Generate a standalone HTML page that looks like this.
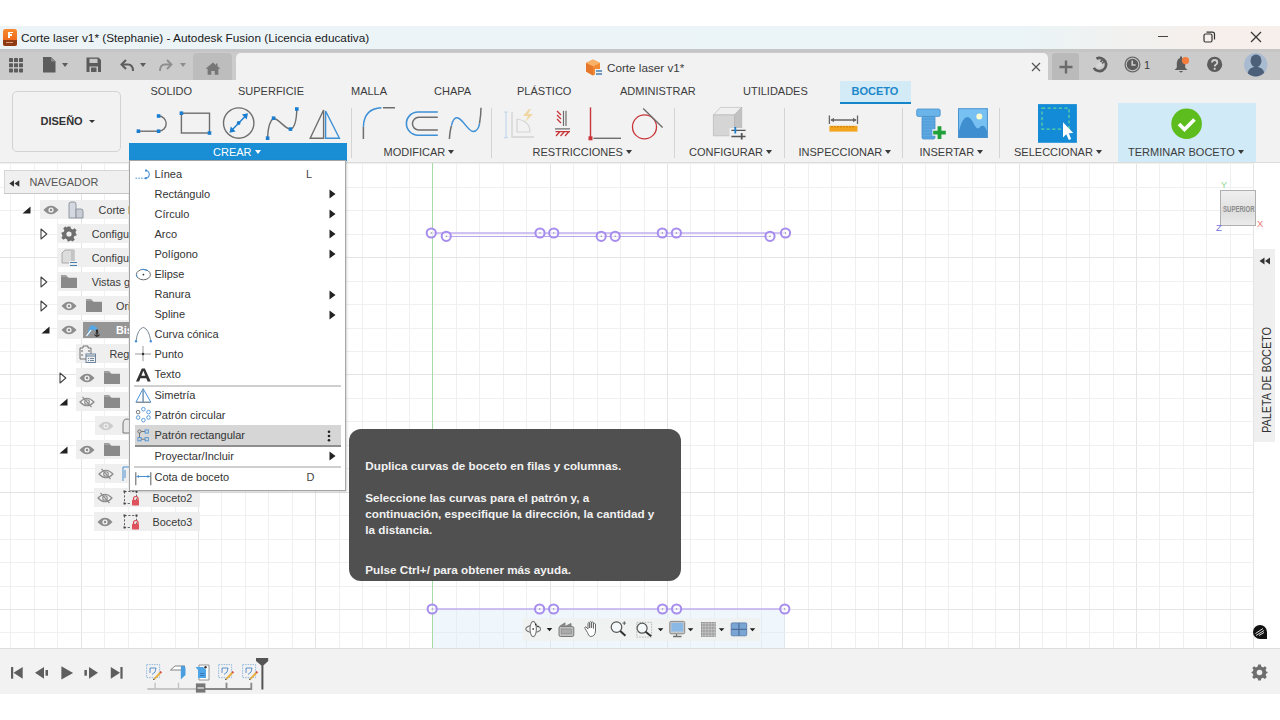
<!DOCTYPE html>
<html><head><meta charset="utf-8">
<style>
*{margin:0;padding:0;box-sizing:border-box}
html,body{width:1280px;height:720px;overflow:hidden;background:#fff;font-family:"Liberation Sans",sans-serif;color:#3c3c3c}
.a{position:absolute}
svg{position:absolute;overflow:visible}
#title{left:0;top:26px;width:1280px;height:23px;background:linear-gradient(90deg,#ecf4f8 0%,#ebf4f7 80%,#f1f1ef 88%,#f6efeb 95%,#f6efeb 100%)}
#tbar{left:0;top:49px;width:1280px;height:31px;background:#cbcbcb;border-top:3px solid #c5c5c5}
#ribbon{left:0;top:80px;width:1280px;height:83px;background:#f2f2f2;border-bottom:1px solid #dcdcdc}
#timeline{left:0;top:648px;width:1280px;height:46px;background:#f2f2f2;border-top:1px solid #dddddd}
.t{position:absolute;white-space:nowrap;line-height:1}
.tab{top:86px;font-size:11px;color:#3c3c3c}
.gl{top:147px;font-size:11px;color:#3c3c3c}
.sep{position:absolute;top:108px;width:1px;height:50px;background:#d4d4d4}
.arr{display:inline-block;width:0;height:0;border-left:3.5px solid transparent;border-right:3.5px solid transparent;border-top:4px solid #3a3a3a;vertical-align:middle;margin-left:3px;position:relative;top:-1px}
</style></head><body>
<div id="title" class="a"></div>
<div id="tbar" class="a"></div>
<div id="ribbon" class="a"></div>
<!--VIEWPORT--><svg style="left:0;top:163px" width="1280" height="485" viewBox="0 0 1280 485"><rect width="1280" height="485" fill="#fff"/><path d="M10.5 0V485" stroke="#f0f0f0"/><path d="M34.5 0V485" stroke="#f0f0f0"/><path d="M57.5 0V485" stroke="#f0f0f0"/><path d="M81.5 0V485" stroke="#e4e4e4"/><path d="M104.5 0V485" stroke="#f0f0f0"/><path d="M128.5 0V485" stroke="#f0f0f0"/><path d="M151.5 0V485" stroke="#f0f0f0"/><path d="M175.5 0V485" stroke="#f0f0f0"/><path d="M198.5 0V485" stroke="#e4e4e4"/><path d="M221.5 0V485" stroke="#f0f0f0"/><path d="M245.5 0V485" stroke="#f0f0f0"/><path d="M268.5 0V485" stroke="#f0f0f0"/><path d="M292.5 0V485" stroke="#f0f0f0"/><path d="M315.5 0V485" stroke="#e4e4e4"/><path d="M339.5 0V485" stroke="#f0f0f0"/><path d="M362.5 0V485" stroke="#f0f0f0"/><path d="M386.5 0V485" stroke="#f0f0f0"/><path d="M409.5 0V485" stroke="#f0f0f0"/><path d="M456.5 0V485" stroke="#f0f0f0"/><path d="M479.5 0V485" stroke="#f0f0f0"/><path d="M503.5 0V485" stroke="#f0f0f0"/><path d="M526.5 0V485" stroke="#f0f0f0"/><path d="M550.5 0V485" stroke="#e4e4e4"/><path d="M573.5 0V485" stroke="#f0f0f0"/><path d="M597.5 0V485" stroke="#f0f0f0"/><path d="M620.5 0V485" stroke="#f0f0f0"/><path d="M644.5 0V485" stroke="#f0f0f0"/><path d="M667.5 0V485" stroke="#e4e4e4"/><path d="M690.5 0V485" stroke="#f0f0f0"/><path d="M714.5 0V485" stroke="#f0f0f0"/><path d="M737.5 0V485" stroke="#f0f0f0"/><path d="M761.5 0V485" stroke="#f0f0f0"/><path d="M784.5 0V485" stroke="#e4e4e4"/><path d="M808.5 0V485" stroke="#f0f0f0"/><path d="M831.5 0V485" stroke="#f0f0f0"/><path d="M855.5 0V485" stroke="#f0f0f0"/><path d="M878.5 0V485" stroke="#f0f0f0"/><path d="M902.5 0V485" stroke="#e4e4e4"/><path d="M925.5 0V485" stroke="#f0f0f0"/><path d="M948.5 0V485" stroke="#f0f0f0"/><path d="M972.5 0V485" stroke="#f0f0f0"/><path d="M995.5 0V485" stroke="#f0f0f0"/><path d="M1019.5 0V485" stroke="#e4e4e4"/><path d="M1042.5 0V485" stroke="#f0f0f0"/><path d="M1066.5 0V485" stroke="#f0f0f0"/><path d="M1089.5 0V485" stroke="#f0f0f0"/><path d="M1113.5 0V485" stroke="#f0f0f0"/><path d="M1136.5 0V485" stroke="#e4e4e4"/><path d="M1159.5 0V485" stroke="#f0f0f0"/><path d="M1183.5 0V485" stroke="#f0f0f0"/><path d="M1206.5 0V485" stroke="#f0f0f0"/><path d="M1230.5 0V485" stroke="#f0f0f0"/><path d="M1253.5 0V485" stroke="#e4e4e4"/><path d="M0 0.5H1253.5" stroke="#f0f0f0"/><path d="M0 24.5H1253.5" stroke="#f0f0f0"/><path d="M0 47.5H1253.5" stroke="#f0f0f0"/><path d="M0 71.5H1253.5" stroke="#f0f0f0"/><path d="M0 94.5H1253.5" stroke="#e4e4e4"/><path d="M0 118.5H1253.5" stroke="#f0f0f0"/><path d="M0 141.5H1253.5" stroke="#f0f0f0"/><path d="M0 165.5H1253.5" stroke="#f0f0f0"/><path d="M0 188.5H1253.5" stroke="#f0f0f0"/><path d="M0 211.5H1253.5" stroke="#e4e4e4"/><path d="M0 235.5H1253.5" stroke="#f0f0f0"/><path d="M0 258.5H1253.5" stroke="#f0f0f0"/><path d="M0 282.5H1253.5" stroke="#f0f0f0"/><path d="M0 305.5H1253.5" stroke="#f0f0f0"/><path d="M0 329.5H1253.5" stroke="#e4e4e4"/><path d="M0 352.5H1253.5" stroke="#f0f0f0"/><path d="M0 376.5H1253.5" stroke="#f0f0f0"/><path d="M0 399.5H1253.5" stroke="#f0f0f0"/><path d="M0 423.5H1253.5" stroke="#f0f0f0"/><path d="M0 446.5H1253.5" stroke="#e4e4e4"/><path d="M0 469.5H1253.5" stroke="#f0f0f0"/><rect x="432" y="446" width="353" height="39" fill="#d6ebf8" opacity="0.4"/><path d="M432.5 0V485" stroke="#a6dba6"/><path d="M431 70H786" stroke="#c2b0f2" stroke-width="1.6"/><path d="M446 73.5H770" stroke="#b9a6ee" stroke-width="1.2"/><circle cx="431.25" cy="70" r="4.6" fill="#fff" fill-opacity="0.6" stroke="#a68cec" stroke-width="2"/><circle cx="431.25" cy="70" r="0.7" fill="#8a8a8a"/><circle cx="540" cy="70" r="4.6" fill="#fff" fill-opacity="0.6" stroke="#a68cec" stroke-width="2"/><circle cx="540" cy="70" r="0.7" fill="#8a8a8a"/><circle cx="553.75" cy="70" r="4.6" fill="#fff" fill-opacity="0.6" stroke="#a68cec" stroke-width="2"/><circle cx="553.75" cy="70" r="0.7" fill="#8a8a8a"/><circle cx="662.3" cy="70" r="4.6" fill="#fff" fill-opacity="0.6" stroke="#a68cec" stroke-width="2"/><circle cx="662.3" cy="70" r="0.7" fill="#8a8a8a"/><circle cx="676.4" cy="70" r="4.6" fill="#fff" fill-opacity="0.6" stroke="#a68cec" stroke-width="2"/><circle cx="676.4" cy="70" r="0.7" fill="#8a8a8a"/><circle cx="785.5" cy="70" r="4.6" fill="#fff" fill-opacity="0.6" stroke="#a68cec" stroke-width="2"/><circle cx="785.5" cy="70" r="0.7" fill="#8a8a8a"/><circle cx="446.25" cy="73.30000000000001" r="4.6" fill="#fff" fill-opacity="0.6" stroke="#a68cec" stroke-width="2"/><circle cx="446.25" cy="73.30000000000001" r="0.7" fill="#8a8a8a"/><circle cx="601.2" cy="73.30000000000001" r="4.6" fill="#fff" fill-opacity="0.6" stroke="#a68cec" stroke-width="2"/><circle cx="601.2" cy="73.30000000000001" r="0.7" fill="#8a8a8a"/><circle cx="615.2" cy="73.30000000000001" r="4.6" fill="#fff" fill-opacity="0.6" stroke="#a68cec" stroke-width="2"/><circle cx="615.2" cy="73.30000000000001" r="0.7" fill="#8a8a8a"/><circle cx="770" cy="73.30000000000001" r="4.6" fill="#fff" fill-opacity="0.6" stroke="#a68cec" stroke-width="2"/><circle cx="770" cy="73.30000000000001" r="0.7" fill="#8a8a8a"/><path d="M432 446H785" stroke="#c0adf2" stroke-width="1.6"/><circle cx="432.2" cy="446" r="4.6" fill="#fff" fill-opacity="0.6" stroke="#a68cec" stroke-width="2"/><circle cx="432.2" cy="446" r="0.7" fill="#8a8a8a"/><circle cx="539.6" cy="446" r="4.6" fill="#fff" fill-opacity="0.6" stroke="#a68cec" stroke-width="2"/><circle cx="539.6" cy="446" r="0.7" fill="#8a8a8a"/><circle cx="553.6" cy="446" r="4.6" fill="#fff" fill-opacity="0.6" stroke="#a68cec" stroke-width="2"/><circle cx="553.6" cy="446" r="0.7" fill="#8a8a8a"/><circle cx="662.5" cy="446" r="4.6" fill="#fff" fill-opacity="0.6" stroke="#a68cec" stroke-width="2"/><circle cx="662.5" cy="446" r="0.7" fill="#8a8a8a"/><circle cx="676.6" cy="446" r="4.6" fill="#fff" fill-opacity="0.6" stroke="#a68cec" stroke-width="2"/><circle cx="676.6" cy="446" r="0.7" fill="#8a8a8a"/><circle cx="784.8" cy="446" r="4.6" fill="#fff" fill-opacity="0.6" stroke="#a68cec" stroke-width="2"/><circle cx="784.8" cy="446" r="0.7" fill="#8a8a8a"/></svg><!--/VIEWPORT-->
<div id="timeline" class="a"></div>

<!-- title bar content -->
<div class="a" style="left:2.5px;top:29px;width:14px;height:16.5px;border-radius:2.5px;background:linear-gradient(180deg,#f7892e,#ea5a17);overflow:hidden">
 <div class="a" style="left:0;top:10.5px;width:14px;height:6px;background:#8e3a12"></div>
 <div class="a" style="left:5.5px;top:2.5px;width:1.8px;height:6.5px;background:#fff"></div>
 <div class="a" style="left:5.5px;top:2.5px;width:4.5px;height:1.6px;background:#fff"></div>
 <div class="a" style="left:5.5px;top:5.2px;width:3.8px;height:1.5px;background:#fff"></div>
 <div class="a" style="left:3.5px;top:12.5px;width:7px;height:1.5px;background:#d8a080"></div>
</div>
<div class="t" style="left:21px;top:32.5px;font-size:11.8px;color:#1a1a1a">Corte laser v1* (Stephanie) - Autodesk Fusion (Licencia educativa)</div>
<div class="a" style="left:1158px;top:36px;width:10px;height:1.3px;background:#444"></div>
<svg style="left:1203px;top:31px" width="13" height="12" viewBox="0 0 13 12"><rect x="1" y="3" width="8" height="8" rx="1.5" fill="none" stroke="#333" stroke-width="1.2"/><path d="M3.5 1.2 H9.5 a2 2 0 0 1 2 2 V8.5" fill="none" stroke="#333" stroke-width="1.2"/></svg>
<svg style="left:1250px;top:31px" width="12" height="12" viewBox="0 0 12 12"><path d="M1 1 L11 11 M11 1 L1 11" stroke="#333" stroke-width="1.2"/></svg>

<!-- toolbar content -->
<svg style="left:9px;top:57.5px" width="14" height="15" viewBox="0 0 14 15"><g fill="#5c5c5c"><rect x="0" y="0" width="4" height="4" rx="0.6"/><rect x="5" y="0" width="4" height="4" rx="0.6"/><rect x="10" y="0" width="4" height="4" rx="0.6"/><rect x="0" y="5.2" width="4" height="4" rx="0.6"/><rect x="5" y="5.2" width="4" height="4" rx="0.6"/><rect x="10" y="5.2" width="4" height="4" rx="0.6"/><rect x="0" y="10.4" width="4" height="4" rx="0.6"/><rect x="5" y="10.4" width="4" height="4" rx="0.6"/><rect x="10" y="10.4" width="4" height="4" rx="0.6"/></g></svg>
<svg style="left:42px;top:57px" width="28" height="16" viewBox="0 0 28 16"><path d="M1 0 H9 L13.5 4.5 V15.5 H1 Z" fill="#5c5c5c"/><path d="M9 0 V4.5 H13.5" fill="#8a8a8a"/><path d="M20 6 H26 L23 10 Z" fill="#5c5c5c"/></svg>
<svg style="left:86px;top:57px" width="16" height="16" viewBox="0 0 16 16"><path d="M0.5 0.5 H12.5 L15 3 V15 H0.5 Z" fill="#5c5c5c"/><rect x="3.5" y="1.8" width="8" height="4.2" fill="#c9c9c9"/><rect x="3.5" y="9.5" width="8.5" height="5.5" fill="#c9c9c9"/><rect x="5" y="10.5" width="5.5" height="4.5" fill="#5c5c5c"/></svg>
<svg style="left:120px;top:58px" width="28" height="15" viewBox="0 0 28 15"><path d="M6 2 L1.5 6.5 L6 11" fill="none" stroke="#5c5c5c" stroke-width="2"/><path d="M2 6.5 H8 Q13 6.5 13 13" fill="none" stroke="#5c5c5c" stroke-width="2"/><path d="M20 5 H26 L23 9 Z" fill="#5c5c5c"/></svg>
<svg style="left:158px;top:58px" width="28" height="15" viewBox="0 0 28 15"><path d="M9 2 L13.5 6.5 L9 11" fill="none" stroke="#8e8e8e" stroke-width="1.8"/><path d="M13 6.5 H7 Q2 6.5 2 13" fill="none" stroke="#8e8e8e" stroke-width="1.8"/><path d="M22 5 H28 L25 9 Z" fill="#8e8e8e"/></svg>
<div class="a" style="left:193px;top:53px;width:39px;height:27px;background:#bdbdbd;border-radius:4px 4px 0 0"></div>
<svg style="left:205px;top:61.5px" width="16" height="13" viewBox="0 0 16 13"><path d="M8 0.5 L0.5 6.8 H2.6 V12.8 H6.3 V9 H9.7 V12.8 H13.4 V6.8 H15.5 L12.5 4.3 V1.5 H11 V3 Z" fill="#777"/></svg>
<div class="a" style="left:236px;top:53px;width:812px;height:27.5px;background:#f2f2f2;border-radius:5px 5px 0 0"></div>
<svg style="left:585px;top:59px" width="19" height="18" viewBox="0 0 19 18"><path d="M1 4 L8 0.5 L15 4 V12.5 L8 16.5 L1 12.5 Z" fill="#f08a35"/><path d="M1 4 L8 7.5 L15 4 L8 0.5 Z" fill="#f9b067"/><path d="M8 7.5 V16.5 L1 12.5 V4 Z" fill="#e5782a"/><rect x="10" y="10" width="8" height="7" fill="#f0f0f0"/><path d="M11 12 H17 M17 15 H11" stroke="#4a7fb0" stroke-width="1.3"/></svg>
<div class="t" style="left:607px;top:62px;font-size:11.7px;color:#3a3a3a">Corte laser v1*</div>
<svg style="left:1031px;top:62px" width="10" height="10" viewBox="0 0 10 10"><path d="M1 1 L9 9 M9 1 L1 9" stroke="#555" stroke-width="1.2"/></svg>
<div class="a" style="left:1052px;top:53px;width:27px;height:27px;background:#bababa;border-radius:3px 3px 0 0"></div>
<svg style="left:1059px;top:60px" width="14" height="14" viewBox="0 0 14 14"><path d="M7 0.5 V13.5 M0.5 7 H13.5" stroke="#6b6b6b" stroke-width="2.4"/></svg>
<svg style="left:1091px;top:56px" width="17" height="17" viewBox="0 0 17 17"><path d="M5.40 2.67 A6.6 6.6 0 1 1 2.78 11.80" fill="none" stroke="#5c5c5c" stroke-width="2.6"/><g transform="rotate(45 8.5 8.5)"><path d="M6.5 6 H10.5 V10 Q10.5 12 8.5 12 Q6.5 12 6.5 10 Z" fill="#d6d6d6"/><path d="M7.3 6 V2.8 M9.7 6 V2.8" stroke="#5c5c5c" stroke-width="1.5"/></g></svg>
<svg style="left:1124px;top:56px" width="17" height="17" viewBox="0 0 17 17"><circle cx="8.5" cy="8.5" r="7.4" fill="none" stroke="#6a6a6a" stroke-width="1.3"/><circle cx="8.5" cy="8.5" r="5.8" fill="#5c5c5c"/><path d="M8.2 4.6 V9 H11.6" fill="none" stroke="#d0d0d0" stroke-width="1.5"/></svg>
<div class="t" style="left:1144px;top:59.5px;font-size:11px;color:#3a3a3a">1</div>
<svg style="left:1173px;top:55px" width="18" height="19" viewBox="0 0 18 19"><path d="M8 3 C4.5 3 3.8 6.5 3.8 9.5 V12.8 L1.5 15 H14.5 L12.2 12.8 V9.5 C12.2 6.5 11.5 3 8 3 Z" fill="#5c5c5c"/><path d="M7 1.5 H9 V3.5 H7 Z" fill="#5c5c5c"/><path d="M5.8 16 H10.2 L8 17.8 Z" fill="#5c5c5c"/><circle cx="12.5" cy="5.6" r="3.6" fill="#f47c3c"/></svg>
<svg style="left:1207px;top:57px" width="16" height="16" viewBox="0 0 16 16"><circle cx="7.6" cy="7.4" r="7.6" fill="#5c5c5c"/><path d="M5 5.6 Q5 3 7.6 3 Q10.3 3 10.3 5.4 Q10.3 6.9 8.7 7.7 Q7.7 8.3 7.7 9.6" fill="none" stroke="#d0d0d0" stroke-width="1.8"/><circle cx="7.7" cy="11.8" r="1.15" fill="#d0d0d0"/></svg>
<svg style="left:1244px;top:53px" width="24" height="24" viewBox="0 0 24 24"><defs><clipPath id="av"><circle cx="11.7" cy="11.8" r="11.7"/></clipPath></defs><circle cx="11.7" cy="11.8" r="11.7" fill="#a9bbd1"/><g clip-path="url(#av)"><ellipse cx="12" cy="7.8" rx="5.5" ry="6.3" fill="#4d6079"/><path d="M3 24 Q3.5 15.5 8.5 14.5 L12 13 L15.5 14.5 Q20.5 15.5 21 24 Z" fill="#4d6079"/></g></svg>

<!-- ribbon tabs -->
<div class="t tab" style="left:150.5px">SOLIDO</div>
<div class="t tab" style="left:238px">SUPERFICIE</div>
<div class="t tab" style="left:351px">MALLA</div>
<div class="t tab" style="left:434px">CHAPA</div>
<div class="t tab" style="left:517px">PLÁSTICO</div>
<div class="t tab" style="left:620px">ADMINISTRAR</div>
<div class="t tab" style="left:743px">UTILIDADES</div>
<div class="a" style="left:840px;top:80.6px;width:71px;height:23.2px;background:#d3eaf7;border-bottom:2.8px solid #1587c9"></div>
<div class="t tab" style="left:851.5px;color:#1d87c9;font-weight:bold;font-size:11px">BOCETO</div>

<!-- DISEÑO -->
<div class="a" style="left:12px;top:91px;width:109px;height:61px;border:1.5px solid #d3d3d3;border-radius:5px"></div>
<div class="t" style="left:40.5px;top:116px;font-size:11px;font-weight:bold;color:#333">DISEÑO</div>
<div class="a" style="left:89.3px;top:120px;width:0;height:0;border-left:3px solid transparent;border-right:3px solid transparent;border-top:3.5px solid #333"></div>

<!-- group labels -->
<div class="a" style="left:129px;top:143px;width:218px;height:18px;background:#1a8ed4"></div>
<div class="t gl" style="left:213px;color:#fff">CREAR<span class="arr" style="border-top-color:#fff"></span></div>
<div class="t gl" style="left:383.5px">MODIFICAR<span class="arr"></span></div>
<div class="t gl" style="left:532.5px">RESTRICCIONES<span class="arr"></span></div>
<div class="t gl" style="left:689px">CONFIGURAR<span class="arr"></span></div>
<div class="t gl" style="left:798.5px">INSPECCIONAR<span class="arr"></span></div>
<div class="t gl" style="left:919.5px">INSERTAR<span class="arr"></span></div>
<div class="a" style="left:1118px;top:103px;width:138px;height:59px;background:#d1eaf7"></div>
<div class="t gl" style="left:1014px">SELECCIONAR<span class="arr"></span></div>
<div class="t gl" style="left:1128px">TERMINAR BOCETO<span class="arr"></span></div>
<div class="sep" style="left:351px"></div>
<div class="sep" style="left:491px"></div>
<div class="sep" style="left:674px"></div>
<div class="sep" style="left:783.5px"></div>
<div class="sep" style="left:902px"></div>
<div class="sep" style="left:999px"></div>
<!--ICONS--><svg style="left:0;top:0" width="1280" height="163" viewBox="0 0 1280 163">
<g fill="none" stroke="#6e6e6e" stroke-width="1.4">
 <!-- line -->
 <path d="M138.4 131.2 H158.6"/>
 <path d="M158.6 116 A7.6 7.6 0 0 1 158.6 131.2"/>
 <!-- rect -->
 <rect x="181.4" y="113.2" width="28.1" height="19.8"/>
 <!-- circle -->
 <circle cx="238.7" cy="123.1" r="15.2"/>
 <!-- spline -->
 <path d="M267.6 137 C268 128 269.5 121 273.6 118.2 C279 119 285 129 290.5 129.2 C295 128 296.5 118 296.8 110"/>
 <!-- mirror -->
 <path d="M310.2 138.2 L323.6 110 V138.2 Z"/>
</g>
<path d="M325.6 111 V138.2 H339.4 Z" fill="none" stroke="#3d8fd6" stroke-width="1.4"/>
<g fill="#1a7ed0">
 <rect x="136.6" y="129.4" width="3.6" height="3.6"/><rect x="156.8" y="129.4" width="3.6" height="3.6"/><rect x="156.8" y="114.2" width="3.6" height="3.6"/>
 <rect x="179.6" y="111.4" width="3.6" height="3.6"/><rect x="207.7" y="131.2" width="3.6" height="3.6"/>
 <rect x="265.8" y="136.4" width="3.6" height="3.6"/><rect x="271.8" y="116.4" width="3.6" height="3.6"/><rect x="288.7" y="127.3" width="3.6" height="3.6"/><rect x="295" y="107.2" width="3.6" height="3.6"/>
 <circle cx="238.6" cy="123" r="1.9"/>
</g>
<path d="M231 131 L246.5 115" stroke="#1a7ed0" stroke-width="1.4"/>
<path d="M229.5 132.7 L230.8 126.6 L235.6 131.4 Z M248 113.3 L246.7 119.4 L241.9 114.6 Z" fill="#1a7ed0"/>

<!-- MODIFICAR -->
<path d="M363.4 139 V126.8 M383 107.8 H395" fill="none" stroke="#6e6e6e" stroke-width="1.5"/>
<path d="M363.4 126.8 Q364 108.5 381.4 107.8" fill="none" stroke="#3d8fd6" stroke-width="1.5"/>
<path d="M437.8 112 H418 A11.6 11.6 0 0 0 418 135.2 H437.8" fill="none" stroke="#3d8fd6" stroke-width="1.6"/>
<path d="M437.8 117.3 H418.8 A6.35 6.35 0 0 0 418.8 130 H437.8" fill="none" stroke="#6e6e6e" stroke-width="1.5"/>
<path d="M449.4 139 Q450 130 451.5 125.7 M479.5 123.6 Q481 115 481 107.8" fill="none" stroke="#6e6e6e" stroke-width="1.5"/>
<path d="M451.5 125.7 C453 119 455 117.6 457 117.8 C463 118.5 468 131.5 473 131.5 C477 131.5 479 127 479.5 123.6" fill="none" stroke="#3d8fd6" stroke-width="1.5"/>

<!-- RESTRICCIONES -->
<g opacity="0.55">
 <path d="M506 112 V137.6 M504 112 H508 M504 137.6 H508" stroke="#9cc4e4" stroke-width="1.2" fill="none"/>
 <path d="M512 112 V137 H534" stroke="#bdbdbd" stroke-width="1.4" fill="none"/>
 <path d="M517 119 V132 H530 Q530 121 517 119" stroke="#bdbdbd" stroke-width="1.2" fill="none"/>
 <path d="M529 109 L523 116 H528 L525 122 L533 114 H528 L531 109 Z" fill="#f0c060"/>
</g>
<path d="M563.5 110.7 V126 M566 110.7 V126 M555 128.9 H570" stroke="#6e6e6e" stroke-width="1.2" fill="none"/>
<path d="M557 111 L561 115 M557 115 L561 119 M557 119 L561 123 M556 136 L560 131.5 M560.5 136 L564.5 131.5 M565 136 L569 131.5 M555.5 131.6 H570" stroke="#c9353a" stroke-width="1.3" fill="none"/>
<path d="M590.5 107.4 V137" stroke="#c9353a" stroke-width="1.4"/>
<rect x="588.5" y="136.3" width="4" height="4" fill="#c9353a"/>
<path d="M593.4 138.3 H621" stroke="#6e6e6e" stroke-width="1.4"/>
<circle cx="644.5" cy="126.9" r="12" fill="none" stroke="#c9353a" stroke-width="1.3"/>
<path d="M643.2 108.5 L662.6 127.5" stroke="#6e6e6e" stroke-width="1.4"/>

<!-- CONFIGURAR -->
<path d="M713.4 114.9 H734.6 L741.7 107.4 H720.5 Z" fill="#efefef" stroke="#c4c4c4" stroke-width="0.8"/>
<path d="M713.4 114.9 H734.6 V135.8 H713.4 Z" fill="#d5d5d5" stroke="#bdbdbd" stroke-width="0.8"/>
<path d="M734.6 114.9 L741.7 107.4 V130.4 L734.6 135.8 Z" fill="#c2c2c2" stroke="#b5b5b5" stroke-width="0.8"/>
<rect x="729.5" y="128" width="17" height="11.5" fill="#f0f0f0"/>
<path d="M731.4 130.4 H745.6 M731.4 136.5 H745.6" stroke="#555" stroke-width="1.4"/>
<path d="M735.3 127 V133.5" stroke="#1a7ed0" stroke-width="1.8"/>
<path d="M741.7 133 V139.5" stroke="#555" stroke-width="1.8"/>

<!-- INSPECCIONAR -->
<path d="M829.4 115.5 V123.9 M857.5 115.5 V123.9 M831 120 H856" stroke="#666" stroke-width="1.3" fill="none"/>
<path d="M830.5 120 L834 117.7 V122.3 Z M856.5 120 L853 117.7 V122.3 Z" fill="#666"/>
<rect x="829.4" y="125.8" width="28.1" height="5.8" fill="#f3a51f"/>
<path d="M832 126 V127.6 M835 126 V127.6 M838 126 V127.6 M841 126 V127.6 M844 126 V127.6 M847 126 V127.6 M850 126 V127.6 M853 126 V127.6" stroke="#b06a00" stroke-width="0.8"/>

<!-- INSERTAR -->
<rect x="922" y="116" width="13" height="23" rx="1.5" fill="#5fa9e3" stroke="#4690cc" stroke-width="0.8"/>
<path d="M922 119 H935 M922 122 H935 M922 125 H935 M922 128 H935 M922 131 H935 M922 134 H935 M922 137 H935" stroke="#4a94d0" stroke-width="0.7"/>
<rect x="916.7" y="109" width="23.5" height="7.4" rx="1.5" fill="#6ab4ea" stroke="#4690cc" stroke-width="0.8"/>
<path d="M939.5 125.5 V139.7 M932.4 132.6 H946.6" stroke="#f0f0f0" stroke-width="6.5"/>
<path d="M939.5 126.3 V138.9 M933.2 132.6 H945.8" stroke="#22a03a" stroke-width="3.8"/>
<rect x="958.5" y="108.7" width="28.9" height="28.8" fill="#77c0f2" stroke="#4a93cf" stroke-width="1"/>
<path d="M959 137 V131 Q962 118 967 117 Q971 117 975 126 Q977 129.5 979 128 Q982 124 985 127 L987 131 V137 Z" fill="#3f8fd0"/>
<circle cx="979.3" cy="116.4" r="3" fill="#fdfbd0"/>

<!-- SELECCIONAR -->
<rect x="1038" y="104.1" width="38.9" height="38.7" fill="#148bd6"/>
<rect x="1042" y="108.2" width="27" height="21" fill="none" stroke="#5fd3a0" stroke-width="1.3" stroke-dasharray="3.2 2.4"/>
<path d="M1063 122.3 V137.5 L1066.3 134.2 L1068.8 140 L1071.2 138.9 L1068.8 133.3 L1073.3 133 Z" fill="#fff"/>

<!-- TERMINAR -->
<circle cx="1186.6" cy="123.8" r="15.3" fill="#5ebd1e"/>
<path d="M1179 124 L1184.5 129.5 L1194.5 119.5" fill="none" stroke="#fff" stroke-width="3.6"/>
</svg>
<!--/ICONS-->
<!--NAV--><div class="a" style="left:4px;top:170px;width:126px;height:24px;background:#f0f0f0;border:1px solid #d6d6d6;border-bottom-color:#c6c6c6"></div>
<svg style="left:9px;top:180px" width="11" height="7" viewBox="0 0 11 7"><path d="M0.3 3.5 L5 0.3 V6.7 Z M5.5 3.5 L10.3 0.3 V6.7 Z" fill="#333"/></svg>
<div class="t" style="left:29.5px;top:177px;font-size:10.9px;color:#555">NAVEGADOR</div>
<svg width="0" height="0" style="position:absolute">
<defs>
 <symbol id="eye" viewBox="0 0 16 10"><path d="M0.5 5 Q8 -3.5 15.5 5 Q8 13.5 0.5 5 Z" fill="#8c8c8c"/><circle cx="8" cy="5" r="2.6" fill="#efefef"/><circle cx="8" cy="5" r="1.2" fill="#8c8c8c"/></symbol>
 <symbol id="eyeh" viewBox="0 0 16 12"><path d="M1 6 Q8 -1.5 15 6 Q8 13.5 1 6 Z" fill="none" stroke="#8c8c8c" stroke-width="1.1"/><circle cx="8" cy="6" r="2.3" fill="none" stroke="#8c8c8c" stroke-width="1.1"/><path d="M3.5 0.8 L12.5 11.2" stroke="#8c8c8c" stroke-width="1.2"/></symbol>
 <symbol id="fold" viewBox="0 0 16 13"><path d="M0 1.2 H6 L7.5 2.8 H16 V13 H0 Z" fill="#8a8a8a"/><path d="M0 0 H5.5 V0.8 H0 Z" fill="#8a8a8a"/></symbol>
 <symbol id="sk" viewBox="0 0 16 16"><path d="M1.5 1.5 H13.5 V12" fill="none" stroke="#555" stroke-width="0.9" stroke-dasharray="2.2 1.6"/><path d="M1.5 1.5 V13.5 H8" fill="none" stroke="#555" stroke-width="0.9" stroke-dasharray="2.2 1.6"/><rect x="0.5" y="0.5" width="2" height="2" fill="#444"/><rect x="12.5" y="0.5" width="2" height="2" fill="#444"/><rect x="0.5" y="12.5" width="2" height="2" fill="#444"/><path d="M10.5 10 V8.8 A2.3 2.3 0 0 1 15.1 8.8 V10" fill="none" stroke="#d8454f" stroke-width="1.2"/><rect x="9" y="9.8" width="7" height="5.8" rx="0.8" fill="#e0535c"/></symbol>
</defs></svg>
<div class="a" style="left:40px;top:200px;width:90px;height:19px;background:#efefef"></div>
<div class="a" style="left:57.6px;top:224px;width:72.4px;height:19px;background:#efefef"></div>
<div class="a" style="left:57.6px;top:248px;width:72.4px;height:19px;background:#efefef"></div>
<div class="a" style="left:57.6px;top:272px;width:72.4px;height:19px;background:#efefef"></div>
<div class="a" style="left:57px;top:296px;width:73px;height:19px;background:#efefef"></div>
<div class="a" style="left:57px;top:320px;width:73px;height:19px;background:#efefef"></div>
<div class="a" style="left:76px;top:344px;width:54px;height:19px;background:#efefef"></div>
<div class="a" style="left:76px;top:368px;width:54px;height:19px;background:#efefef"></div>
<div class="a" style="left:76px;top:392px;width:54px;height:19px;background:#efefef"></div>
<div class="a" style="left:94.5px;top:416px;width:35.5px;height:19px;background:#efefef"></div>
<div class="a" style="left:76px;top:440px;width:54px;height:19px;background:#efefef"></div>
<div class="a" style="left:94.5px;top:464px;width:35.5px;height:19px;background:#efefef"></div>
<div class="a" style="left:94.3px;top:488.3px;width:106.2px;height:19px;background:#efefef"></div>
<div class="a" style="left:94.3px;top:512.3px;width:106.2px;height:19px;background:#efefef"></div>
<svg style="left:22px;top:206px" width="9" height="8" viewBox="0 0 9 8"><path d="M8.5 0.5 V7.5 H0.5 Z" fill="#222"/></svg>
<svg style="left:43px;top:204.5px;opacity:1" width="16" height="10" viewBox="0 0 16 10"><use href="#eye"/></svg>
<svg style="left:68px;top:201px" width="16" height="18" viewBox="0 0 16 18"><path d="M1 3 Q1 1 3 1 H6 Q8 1 8 3 V17 H1 Z" fill="#d4d8e0" stroke="#8a8f99" stroke-width="0.9"/><path d="M8 8 H13 Q15 8 15 10 V17 H8 Z" fill="#c8ccd4" stroke="#8a8f99" stroke-width="0.9"/></svg>
<div class="t" style="left:98.6px;top:205px;font-size:10.8px;color:#3a3a3a;">Corte laser</div>
<svg style="left:40px;top:227.5px" width="8" height="12" viewBox="0 0 8 12"><path d="M1 1 L6.8 6 L1 11 Z" fill="#fff" stroke="#444" stroke-width="1.1" stroke-linejoin="round"/></svg>
<svg style="left:61px;top:226px" width="16" height="16" viewBox="0 0 16 16"><path d="M6.6 0.5 H9.4 L9.9 2.6 L11.8 3.4 L13.6 2.2 L15.6 4.2 L14.4 6 L15.2 8 L15.5 8 L15.5 8 V9.4 L13.4 9.9 L12.6 11.8 L13.8 13.6 L11.8 15.6 L10 14.4 L8 15.2 L7.6 15.5 H6.6 L6.1 13.4 L4.2 12.6 L2.4 13.8 L0.4 11.8 L1.6 10 L0.8 8 L0.5 7.6 V6.6 L2.6 6.1 L3.4 4.2 L2.2 2.4 L4.2 0.4 L6 1.6 Z" fill="#6e6e6e"/><circle cx="8" cy="8" r="2.6" fill="#efefef"/></svg>
<div class="t" style="left:91.7px;top:229px;font-size:10.8px;color:#3a3a3a;">Configuración</div>
<svg style="left:61px;top:249px" width="17" height="18" viewBox="0 0 17 18"><path d="M1 4 L4 1 H13 V14 H1 Z" fill="#dcdcdc" stroke="#9a9a9a" stroke-width="0.8"/><path d="M10 1 L13 1 V14 L10 14 Z" fill="#c4c4c4"/><rect x="8" y="12" width="9" height="6" fill="#efefef"/><path d="M9 13.5 H16 M9 16.5 H16" stroke="#4a7fb0" stroke-width="1"/></svg>
<div class="t" style="left:91.7px;top:253px;font-size:10.8px;color:#3a3a3a;">Configuración</div>
<svg style="left:40px;top:275.5px" width="8" height="12" viewBox="0 0 8 12"><path d="M1 1 L6.8 6 L1 11 Z" fill="#fff" stroke="#444" stroke-width="1.1" stroke-linejoin="round"/></svg>
<svg style="left:61px;top:275.0px" width="16" height="13" viewBox="0 0 16 13"><use href="#fold"/></svg>
<div class="t" style="left:91.7px;top:277px;font-size:10.8px;color:#3a3a3a;">Vistas guardadas</div>
<svg style="left:40px;top:299.5px" width="8" height="12" viewBox="0 0 8 12"><path d="M1 1 L6.8 6 L1 11 Z" fill="#fff" stroke="#444" stroke-width="1.1" stroke-linejoin="round"/></svg>
<svg style="left:61px;top:300.5px;opacity:1" width="16" height="10" viewBox="0 0 16 10"><use href="#eye"/></svg>
<svg style="left:86px;top:299.0px" width="16" height="13" viewBox="0 0 16 13"><use href="#fold"/></svg>
<div class="t" style="left:116px;top:301px;font-size:10.8px;color:#3a3a3a;">Origen</div>
<svg style="left:41px;top:326px" width="9" height="8" viewBox="0 0 9 8"><path d="M8.5 0.5 V7.5 H0.5 Z" fill="#222"/></svg>
<svg style="left:61px;top:324.5px;opacity:1" width="16" height="10" viewBox="0 0 16 10"><use href="#eye"/></svg>
<div class="a" style="left:83px;top:322px;width:47px;height:16px;background:#959595"></div>
<svg style="left:85px;top:322px" width="18" height="16" viewBox="0 0 18 16"><path d="M2 13 L4 6 Q5 3 8 3 L13 6 L10 9 Q8 7 6 9 L3 14 Z" fill="#5aa6e0"/><path d="M1.5 14 L6 8" stroke="#fff" stroke-width="1.2"/><circle cx="12" cy="8.8" r="1.2" fill="#222"/><path d="M12 9.5 V15 M9.5 12.5 Q12 16 14.5 12.5 M10.5 11 H13.5" fill="none" stroke="#222" stroke-width="1.1"/></svg>
<div class="t" style="left:116px;top:325px;font-size:10.8px;color:#3a3a3a;color:#fff;font-weight:bold">Bisagra</div>
<svg style="left:79px;top:345px" width="17" height="18" viewBox="0 0 17 18"><path d="M1 3 H4 V1 H9 V3 H12 V14 H1 Z" fill="none" stroke="#666" stroke-width="0.9"/><path d="M3 5 V7 M3 9 V11 M10 5 V7" stroke="#666" stroke-width="1"/><rect x="7" y="9" width="9.5" height="8.5" fill="#efefef" stroke="#5e7a94" stroke-width="0.9"/><path d="M7 11 H16.5" stroke="#5e7a94" stroke-width="1"/><path d="M9 13.5 H10 M11 13.5 H15 M9 15.5 H10 M11 15.5 H15" stroke="#5e7a94" stroke-width="0.9"/></svg>
<div class="t" style="left:109.4px;top:349px;font-size:10.8px;color:#3a3a3a;">Regiones</div>
<svg style="left:58.5px;top:371.5px" width="8" height="12" viewBox="0 0 8 12"><path d="M1 1 L6.8 6 L1 11 Z" fill="#fff" stroke="#444" stroke-width="1.1" stroke-linejoin="round"/></svg>
<svg style="left:79px;top:372.5px;opacity:1" width="16" height="10" viewBox="0 0 16 10"><use href="#eye"/></svg>
<svg style="left:104px;top:371.0px" width="16" height="13" viewBox="0 0 16 13"><use href="#fold"/></svg>
<svg style="left:59px;top:398px" width="9" height="8" viewBox="0 0 9 8"><path d="M8.5 0.5 V7.5 H0.5 Z" fill="#222"/></svg>
<svg style="left:79px;top:395.5px" width="16" height="12" viewBox="0 0 16 12"><use href="#eyeh"/></svg>
<svg style="left:104px;top:395.0px" width="16" height="13" viewBox="0 0 16 13"><use href="#fold"/></svg>
<svg style="left:97.5px;top:420.5px;opacity:0.35" width="16" height="10" viewBox="0 0 16 10"><use href="#eye"/></svg>
<svg style="left:121px;top:418px" width="12" height="16" viewBox="0 0 12 16"><path d="M2 15 V6 Q2 1 6 1 Q10 1 10 6 V15 Z" fill="#e8e8e8" stroke="#777" stroke-width="1"/></svg>
<svg style="left:59px;top:446px" width="9" height="8" viewBox="0 0 9 8"><path d="M8.5 0.5 V7.5 H0.5 Z" fill="#222"/></svg>
<svg style="left:79px;top:444.5px;opacity:1" width="16" height="10" viewBox="0 0 16 10"><use href="#eye"/></svg>
<svg style="left:104px;top:443.0px" width="16" height="13" viewBox="0 0 16 13"><use href="#fold"/></svg>
<svg style="left:97.5px;top:467.5px" width="16" height="12" viewBox="0 0 16 12"><use href="#eyeh"/></svg>
<svg style="left:122px;top:466px" width="8" height="16" viewBox="0 0 8 16"><path d="M1 1 H7 M1 1 V15" fill="none" stroke="#4a90d0" stroke-width="1"/><path d="M3 4 V12" stroke="#4a90d0" stroke-width="1"/></svg>
<svg style="left:97px;top:491.8px" width="16" height="12" viewBox="0 0 16 12"><use href="#eyeh"/></svg>
<svg style="left:122.5px;top:489.5px" width="16" height="16" viewBox="0 0 16 16"><use href="#sk"/></svg>
<div class="t" style="left:152.6px;top:493px;font-size:10.8px;color:#3a3a3a;">Boceto2</div>
<svg style="left:97px;top:516.8px;opacity:1" width="16" height="10" viewBox="0 0 16 10"><use href="#eye"/></svg>
<svg style="left:122.5px;top:513.5px" width="16" height="16" viewBox="0 0 16 16"><use href="#sk"/></svg>
<div class="t" style="left:152.6px;top:517px;font-size:10.8px;color:#3a3a3a;">Boceto3</div><!--/NAV-->
<!--MENU--><div class="a" style="left:129px;top:160px;width:217px;height:331px;background:#fff;border:1px solid #a3a3a3;border-right:1.6px solid #a8a8a8;box-shadow:1px 1px 2px rgba(0,0,0,0.18)"></div>
<div class="a" style="left:134.5px;top:425px;width:206px;height:21.5px;background:#d6d6d6;border-bottom:2px solid #8e8e8e"></div>
<div class="a" style="left:134px;top:384.5px;width:207px;height:2px;background:#cfcfcf"></div>
<div class="a" style="left:134px;top:466px;width:207px;height:2px;background:#cfcfcf"></div>
<div class="t" style="left:154.5px;top:169.0px;font-size:11px;color:#333">Línea</div>
<div class="t" style="left:306px;top:169.0px;font-size:11px;color:#444">L</div>
<div class="t" style="left:154.5px;top:189.0px;font-size:11px;color:#333">Rectángulo</div>
<svg style="left:329px;top:189.2px" width="7" height="10" viewBox="0 0 7 10"><path d="M0.5 0.5 L6.5 5 L0.5 9.5 Z" fill="#222"/></svg>
<div class="t" style="left:154.5px;top:209.1px;font-size:11px;color:#333">Círculo</div>
<svg style="left:329px;top:209.3px" width="7" height="10" viewBox="0 0 7 10"><path d="M0.5 0.5 L6.5 5 L0.5 9.5 Z" fill="#222"/></svg>
<div class="t" style="left:154.5px;top:229.2px;font-size:11px;color:#333">Arco</div>
<svg style="left:329px;top:229.4px" width="7" height="10" viewBox="0 0 7 10"><path d="M0.5 0.5 L6.5 5 L0.5 9.5 Z" fill="#222"/></svg>
<div class="t" style="left:154.5px;top:249.2px;font-size:11px;color:#333">Polígono</div>
<svg style="left:329px;top:249.4px" width="7" height="10" viewBox="0 0 7 10"><path d="M0.5 0.5 L6.5 5 L0.5 9.5 Z" fill="#222"/></svg>
<div class="t" style="left:154.5px;top:269.3px;font-size:11px;color:#333">Elipse</div>
<div class="t" style="left:154.5px;top:289.3px;font-size:11px;color:#333">Ranura</div>
<svg style="left:329px;top:289.5px" width="7" height="10" viewBox="0 0 7 10"><path d="M0.5 0.5 L6.5 5 L0.5 9.5 Z" fill="#222"/></svg>
<div class="t" style="left:154.5px;top:309.4px;font-size:11px;color:#333">Spline</div>
<svg style="left:329px;top:309.6px" width="7" height="10" viewBox="0 0 7 10"><path d="M0.5 0.5 L6.5 5 L0.5 9.5 Z" fill="#222"/></svg>
<div class="t" style="left:154.5px;top:329.1px;font-size:11px;color:#333">Curva cónica</div>
<div class="t" style="left:154.5px;top:349.1px;font-size:11px;color:#333">Punto</div>
<div class="t" style="left:154.5px;top:369.1px;font-size:11px;color:#333">Texto</div>
<div class="t" style="left:154.5px;top:390.3px;font-size:11px;color:#333">Simetría</div>
<div class="t" style="left:154.5px;top:410.3px;font-size:11px;color:#333">Patrón circular</div>
<div class="t" style="left:154.5px;top:430.3px;font-size:11px;color:#333">Patrón rectangular</div>
<svg style="left:327px;top:429.5px" width="4" height="12" viewBox="0 0 4 12"><circle cx="2" cy="1.8" r="1.3" fill="#222"/><circle cx="2" cy="6" r="1.3" fill="#222"/><circle cx="2" cy="10.2" r="1.3" fill="#222"/></svg>
<div class="t" style="left:154.5px;top:451.0px;font-size:11px;color:#333">Proyectar/Incluir</div>
<svg style="left:329px;top:451.2px" width="7" height="10" viewBox="0 0 7 10"><path d="M0.5 0.5 L6.5 5 L0.5 9.5 Z" fill="#222"/></svg>
<div class="t" style="left:154.5px;top:472.3px;font-size:11px;color:#333">Cota de boceto</div>
<div class="t" style="left:306.5px;top:472.3px;font-size:11px;color:#444">D</div>
<svg style="left:0;top:0" width="360" height="500" viewBox="0 0 360 500">
<path d="M135.5 178.2 H146" stroke="#4a92d6" stroke-width="1" stroke-dasharray="1.6 1.2"/>
<path d="M146 170.5 A3.9 3.9 0 0 1 146 178.2" fill="none" stroke="#4a92d6" stroke-width="1.1"/>
<rect x="145" y="169.5" width="2" height="2" fill="#4a92d6"/><rect x="145" y="177.2" width="2" height="2" fill="#4a92d6"/>
<ellipse cx="143.4" cy="274.6" rx="7" ry="5.2" fill="none" stroke="#6a6a6a" stroke-width="1"/>
<path d="M141 269.5 A7 5.2 0 0 1 147.5 270.8 M136.4 274.6 A7 5.2 0 0 0 137 276.7" fill="none" stroke="#4a92d6" stroke-width="1.1"/>
<circle cx="143.4" cy="274.6" r="0.9" fill="#333"/>
<path d="M136 341.3 Q137.5 329 143.3 327.3 Q149 329 150.8 341.3" fill="none" stroke="#7a8a9a" stroke-width="1"/>
<circle cx="136" cy="341.3" r="1.2" fill="#4a92d6"/><circle cx="150.8" cy="341.3" r="1.2" fill="#4a92d6"/>
<path d="M143 346 V361.3 M135 354 H151" stroke="#9a9a9a" stroke-width="1"/>
<circle cx="143" cy="354" r="1.2" fill="#333"/>
<path d="M136 381.5 L141.8 368.4 H144.9 L150.7 381.5 H147.6 L146.3 378.3 H140.4 L139.1 381.5 Z M141.4 375.8 H145.3 L143.35 370.8 Z" fill="#333"/>
<path d="M135.9 402.2 L143.1 388.6 L150.8 402.2 Z" fill="none" stroke="#4a92d6" stroke-width="1"/><path d="M143.1 389 V402.2" stroke="#7a9ab8" stroke-width="1.6"/>
<path d="M136.2 402.3 H150.4" stroke="#888" stroke-width="1"/>

<circle cx="143.4" cy="409.2" r="1.8" fill="#fff" stroke="#4a92d6" stroke-width="0.9"/>
<circle cx="138.1" cy="412.1" r="1.8" fill="#fff" stroke="#6a6a6a" stroke-width="0.9"/>
<circle cx="148.5" cy="412.1" r="1.8" fill="#fff" stroke="#4a92d6" stroke-width="0.9"/>
<circle cx="138.1" cy="417.5" r="1.8" fill="#fff" stroke="#4a92d6" stroke-width="0.9"/>
<circle cx="148.5" cy="417.5" r="1.8" fill="#fff" stroke="#4a92d6" stroke-width="0.9"/>
<circle cx="143.4" cy="420.2" r="1.8" fill="#fff" stroke="#4a92d6" stroke-width="0.9"/>
<path d="M139.5 431.5 H146.7 M139.5 431.5 V439.2 H146.7" fill="none" stroke="#6a6a6a" stroke-width="0.9"/>
<circle cx="139.5" cy="431.5" r="1.6" fill="#d6d6d6" stroke="#6a6a6a" stroke-width="0.9"/>
<rect x="145.1" y="429.9" width="3.2" height="3.2" fill="#d6d6d6" stroke="#4a92d6" stroke-width="0.9"/>
<rect x="137.9" y="437.6" width="3.2" height="3.2" fill="#d6d6d6" stroke="#4a92d6" stroke-width="0.9"/>
<rect x="145.1" y="437.6" width="3.2" height="3.2" fill="#d6d6d6" stroke="#4a92d6" stroke-width="0.9"/>
<path d="M135.8 472.3 V485.3 M150.8 472.3 V485.3" stroke="#6a6a6a" stroke-width="1.1"/>
<path d="M136.5 476.5 H150" stroke="#4a92d6" stroke-width="1.1"/>
<path d="M136.5 476.5 L139 475 V478 Z M150 476.5 L147.5 475 V478 Z" fill="#4a92d6"/>
</svg><!--/MENU-->
<!--TOOLTIP--><div class="a" style="left:349.3px;top:429px;width:332px;height:151.8px;background:#505050;border-radius:12px"></div>
<div class="t" style="left:365.3px;top:460px;font-size:11.7px;font-weight:bold;color:#f2f2f2">Duplica curvas de boceto en filas y columnas.</div>
<div class="t" style="left:365.3px;top:492.3px;font-size:11.7px;font-weight:bold;color:#f2f2f2">Seleccione las curvas para el patrón y, a</div>
<div class="t" style="left:365.3px;top:508.3px;font-size:11.7px;font-weight:bold;color:#f2f2f2">continuación, especifique la dirección, la cantidad y</div>
<div class="t" style="left:365.3px;top:524px;font-size:11.7px;font-weight:bold;color:#f2f2f2">la distancia.</div>
<div class="t" style="left:365.3px;top:564.3px;font-size:11.7px;font-weight:bold;color:#f2f2f2">Pulse Ctrl+/ para obtener más ayuda.</div>
<!--/TOOLTIP-->
<!--BOTTOM-->
<!-- view cube -->
<div class="a" style="left:1220px;top:190px;width:36px;height:36px;background:linear-gradient(180deg,#efefef 0%,#e4e4e4 45%,#dcdcdc 55%,#ebebeb 100%);border:1.5px solid #b0b0b0"></div>
<div class="t" style="left:1223.3px;top:204.5px;font-size:8.4px;color:#8d8d8d;font-weight:bold;transform:scaleX(0.72);transform-origin:0 0">SUPERIOR</div>
<div class="t" style="left:1221px;top:181px;font-size:9px;color:#90d890">Y</div>
<div class="t" style="left:1257px;top:219px;font-size:9.5px;color:#e87878">X</div>
<div class="t" style="left:1216px;top:223px;font-size:9.5px;color:#6f6fe0">Z</div>
<!-- palette -->
<div class="a" style="left:1254px;top:249px;width:21px;height:193px;background:#efefef"></div>
<svg style="left:1259px;top:257px" width="12" height="8" viewBox="0 0 12 8"><path d="M0.5 4 L5.5 0.5 V7.5 Z M6 4 L11 0.5 V7.5 Z" fill="#333"/></svg>
<div class="t" style="left:1261px;top:432.5px;font-size:12.4px;color:#333;transform:rotate(-90deg) scaleX(0.875);transform-origin:0 0">PALETA DE BOCETO</div>
<!-- bottom right badge -->
<svg style="left:1252px;top:624px" width="16" height="16" viewBox="0 0 16 16"><path d="M8 1 A7 7 0 1 0 8 15 H15 V8 A7 7 0 0 0 8 1 Z" fill="#111"/><path d="M3.5 9.5 L11 4.5 M4 11.5 L12 6.5 M7 11.5 L12 8.5" stroke="#ddd" stroke-width="1"/></svg>
<!-- nav toolbar -->
<div class="a" style="left:523px;top:618px;width:237px;height:23px;background:rgba(240,240,240,0.92)"></div>
<!--NAVICONS--><svg style="left:0;top:0" width="1280" height="720" viewBox="0 0 1280 720">
<g fill="#1e1e1e">
<path d="M546.7 627.9 H552.3 L549.5 631.3 Z"/>
<path d="M657.8 628.2 H663.4 L660.6 631.3 Z"/>
<path d="M687.8 628.2 H693.4 L690.6 631.3 Z"/>
<path d="M718.8 628.2 H724.4 L721.6 631.3 Z"/>
<path d="M749.7 628.2 H755.3 L752.5 631.3 Z"/>
</g>
<!-- orbit -->
<ellipse cx="533.2" cy="629" rx="7.4" ry="3.6" fill="none" stroke="#777" stroke-width="1.1"/>
<ellipse cx="533.2" cy="629" rx="3.2" ry="7.6" fill="#fbfbfb" stroke="#777" stroke-width="1.1"/>
<circle cx="533.2" cy="629" r="0.9" fill="#555"/><circle cx="535.8" cy="624.4" r="0.8" fill="#222"/><circle cx="538" cy="626.5" r="0.8" fill="#222"/>
<!-- look at -->
<rect x="559" y="626.5" width="14.8" height="10" rx="1.5" fill="#bdbdbd" stroke="#7a7a7a" stroke-width="1"/>
<rect x="561.5" y="629" width="9.8" height="4.8" fill="#aaa" stroke="#888" stroke-width="0.6"/>
<path d="M559.5 626.3 L565 622.9 V626.3 M565.5 626.3 L571 623.5 V626.3" fill="#8a8a8a" stroke="#7a7a7a" stroke-width="0.9"/>
<!-- hand -->
<path d="M587.5 632.5 L585 628.5 Q584.3 627 585.8 626.8 L588 629 V623.3 Q588.7 621.8 589.7 623.3 V628 V622.2 Q590.6 620.8 591.6 622.2 V628 V622.6 Q592.6 621.2 593.5 622.6 V628.5 V624 Q594.5 622.6 595.5 624 V631 Q595.2 636.5 590.5 636.5 Q588.5 636.3 587.5 632.5 Z" fill="#fff" stroke="#6a6a6a" stroke-width="1"/>
<!-- zoom -->
<circle cx="616.5" cy="627.1" r="5.3" fill="#f4f8f8" stroke="#555" stroke-width="1.2"/>
<path d="M620.3 631 L625.4 635.8" stroke="#333" stroke-width="2"/>
<path d="M624.3 621.3 V625 M622.5 623.1 H626" stroke="#444" stroke-width="0.8"/>
<!-- fit -->
<rect x="636.8" y="622.3" width="14.8" height="14.8" fill="none" stroke="#9a9a9a" stroke-width="0.7" stroke-dasharray="1.5 1.2"/>
<circle cx="642.1" cy="628.2" r="5" fill="#f4f8f8" stroke="#555" stroke-width="1.2"/>
<path d="M645.6 631.8 L651.2 636.3" stroke="#333" stroke-width="2"/>
<!-- monitor -->
<rect x="669.8" y="621.4" width="14.9" height="12.4" rx="1.2" fill="#c8c8c8" stroke="#808080" stroke-width="0.9"/>
<rect x="671.3" y="622.9" width="11.9" height="8.6" fill="#8bb9e6"/>
<path d="M676.5 634 V636 M673 636.5 H681.5" stroke="#707070" stroke-width="1.3"/>
<!-- grid -->
<rect x="701" y="622.1" width="14.7" height="14.7" fill="#7c7c7c"/>
<path d="M702.5 622 V637 M704 622 V637 M705.5 622 V637 M707 622 V637 M708.5 622 V637 M710 622 V637 M711.5 622 V637 M713 622 V637 M714.5 622 V637 M701 623.5 H716 M701 625 H716 M701 626.5 H716 M701 628 H716 M701 629.5 H716 M701 631 H716 M701 632.5 H716 M701 634 H716 M701 635.5 H716" stroke="#cfcfcf" stroke-width="0.6"/>
<!-- viewports -->
<rect x="731.2" y="622.9" width="15.5" height="12.9" rx="1" fill="#7aa6d6" stroke="#5e7fa8" stroke-width="0.9"/>
<path d="M738.95 622.9 V635.8 M731.2 629.35 H746.7" stroke="#4f6f98" stroke-width="1.2"/>
</svg>
<!--/NAVICONS-->
<!-- timeline -->
<!--TIMELINE--><svg style="left:0;top:648px" width="300" height="46" viewBox="0 648 300 46">
<g fill="#5e5e5e">
 <rect x="11" y="667" width="2.2" height="11.7"/><path d="M22.7 667 V678.7 L13.5 672.85 Z"/>
 <path d="M35 672.85 L44 667 V678.7 Z"/><rect x="45.5" y="670" width="2.5" height="5.7"/>
 <path d="M61.4 666.2 V679.6 L73.1 672.9 Z"/>
 <rect x="84.4" y="670" width="2.5" height="5.7"/><path d="M98 672.85 L89 667 V678.7 Z"/>
 <path d="M110.8 667 V678.7 L120 672.85 Z"/><rect x="120.4" y="667" width="2.2" height="11.7"/>
</g>
<path d="M147.4 689 H196" stroke="#c6c6c6" stroke-width="1.8"/>
<path d="M205 689 H251.3 V682.8 M226.5 689 V682.8" fill="none" stroke="#888" stroke-width="1.8"/>
<path d="M155.1 689 V682.8 M178.5 689 V682.8" stroke="#c6c6c6" stroke-width="1.5"/>
<rect x="195.9" y="683.4" width="9.5" height="9.2" fill="#777"/>
<path d="M197.5 688 H203.8" stroke="#eee" stroke-width="1.2"/>
<path d="M256 658.1 H268.2 V661 L263.4 665.5 V689.4 H261.4 V665.5 L256 661 Z" fill="#555"/>
<defs><symbol id="tsk" viewBox="0 0 16 16">
 <rect x="0.6" y="0.6" width="13" height="13" fill="none" stroke="#7aa8d8" stroke-width="0.8" stroke-dasharray="1.5 1"/>
 <path d="M4 4 V9 M4 4 H10 Q10 9 6 10.5" fill="none" stroke="#3a78c0" stroke-width="0.8"/>
 <path d="M7.5 14.5 L13.5 8 L15 9.5 L9 15.5 Z" fill="#e8b040"/><path d="M13.5 8 L14.6 6.9 L16 8.3 L15 9.5 Z" fill="#d83838"/><path d="M7.5 14.5 L7 16 L9 15.5 Z" fill="#333"/>
</symbol></defs>
<use href="#tsk" x="146" y="664" width="16" height="16"/>
<use href="#tsk" x="218" y="664" width="16" height="16"/>
<use href="#tsk" x="242" y="664" width="16" height="16"/>
<path d="M170.5 670 L175 666 H185 L181 670 Z" fill="#fff" stroke="#777" stroke-width="0.9"/>
<path d="M181 666 Q185.5 665 185.5 669 V675 L180.8 679.4 V670 Z" fill="#4a9ee0"/>
<path d="M199 665 H209 V680 H199 Z" fill="#fff" stroke="#888" stroke-width="0.9"/>
<circle cx="205.5" cy="667.2" r="1.2" fill="#333"/>
<path d="M195.5 667 H203 L206 669.5 V678 H198 V670 Z" fill="#4ea6e8"/>
<path d="M200 673.5 H204.5 M200 675.5 H204.5" stroke="#2f6fa8" stroke-width="0.8"/>
</svg>
<svg style="left:1251px;top:664px" width="17" height="17" viewBox="0 0 17 17"><path d="M7.2 0.5 H9.8 L10.3 2.6 L12.1 3.4 L13.9 2.2 L15.7 4 L14.5 5.8 L15.3 7.6 L16.5 8.1 V9 L15.3 9.5 L14.6 11.3 L15.8 13.1 L13.9 15 L12.1 13.8 L10.3 14.5 L9.8 16.5 H7.2 L6.7 14.5 L4.9 13.8 L3.1 15 L1.2 13.1 L2.4 11.3 L1.7 9.5 L0.5 9 V8.1 L1.7 7.6 L2.5 5.8 L1.3 4 L3.1 2.2 L4.9 3.4 L6.7 2.6 Z" fill="#6e6e6e"/><circle cx="8.5" cy="8.5" r="2.8" fill="#f0f0f0"/></svg>
<!--/TIMELINE-->

</body></html>
